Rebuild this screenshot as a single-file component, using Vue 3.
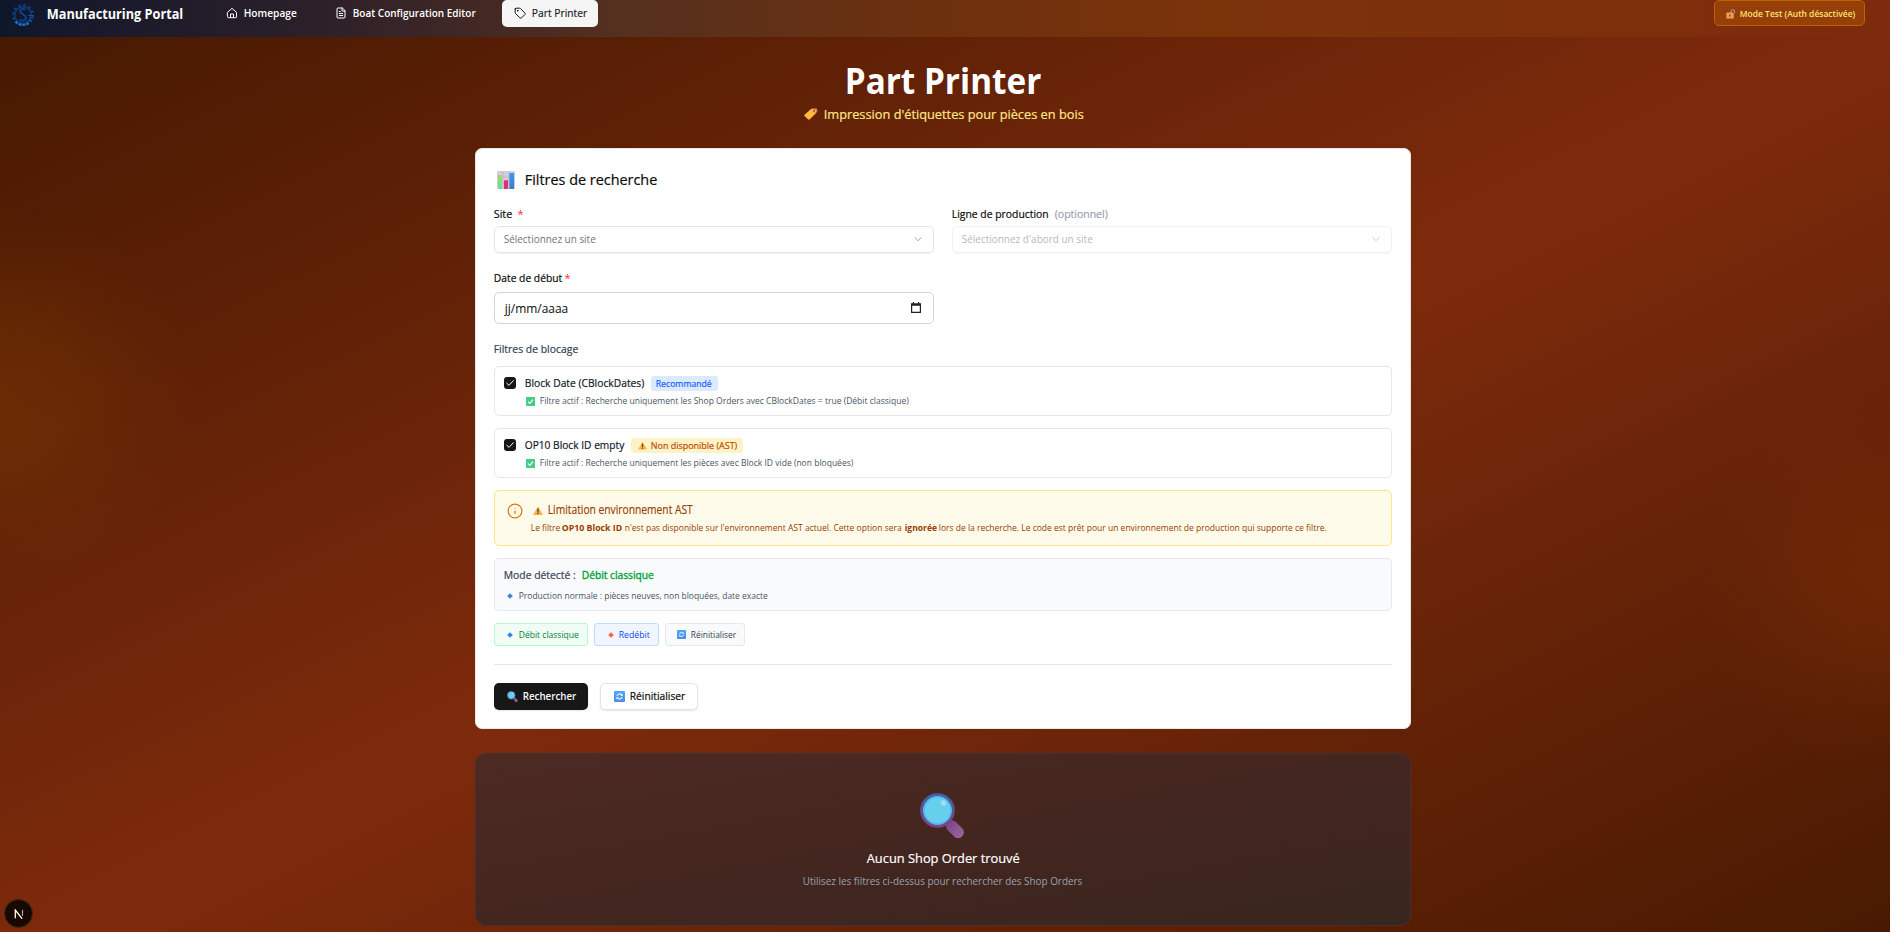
<script setup>
// Condenses or widens a label so that it fills the given width in pixels.
const vFit = {
  mounted(el, { value }) {
    const natural = el.getBoundingClientRect().width
    el.style.width = value + 'px'
    el.style.transform = `translateX(-0.25px) scaleX(${(value / natural).toFixed(4)})`
  }
}

const filters = [
  {
    title: 'Block Date (CBlockDates)', titleWidth: 119.5, badge: 'Recommandé', badgeWidth: 56, tone: 'blue',
    text: 'Filtre actif : Recherche uniquement les Shop Orders avec CBlockDates = true (Débit classique)', textWidth: 369
  },
  {
    title: 'OP10 Block ID empty', titleWidth: 99.5, badge: 'Non disponible (AST)', badgeWidth: 86.5, tone: 'amber',
    text: 'Filtre actif : Recherche uniquement les pièces avec Block ID vide (non bloquées)', textWidth: 313.5
  }
]
</script>

<template>
  <div class="page">
    <svg class="defs" width="0" height="0" aria-hidden="true">
      <defs>
        <linearGradient id="rim" x1="0" y1="0" x2="0" y2="1"><stop offset="0" stop-color="#45609f" /><stop offset="1" stop-color="#7d4387" /></linearGradient>
        <linearGradient id="handle" x1="0" y1="0" x2="1" y2="0"><stop offset="0" stop-color="#7a4689" /><stop offset="1" stop-color="#9c629b" /></linearGradient>
        <linearGradient id="bar-g" x1="0" y1="0" x2="0" y2="1"><stop offset="0" stop-color="#a4dc50" /><stop offset="1" stop-color="#62dfa0" /></linearGradient>
        <linearGradient id="bar-b" x1="0" y1="0" x2="0" y2="1"><stop offset="0" stop-color="#2ba1ee" /><stop offset="1" stop-color="#4a74d2" /></linearGradient>
        <linearGradient id="blue-tile" x1="0" y1="0" x2="0" y2="1"><stop offset="0" stop-color="#4fa9f5" /><stop offset="1" stop-color="#4c8be8" /></linearGradient>
        <symbol id="magnifier" viewBox="0 0 45 45">
          <rect x="25" y="30.5" width="20" height="11.5" rx="5.2" transform="rotate(45 35 36.2)" fill="url(#handle)" />
          <circle cx="17.5" cy="17.5" r="15.8" fill="#66cfeb" stroke="url(#rim)" stroke-width="3" />
          <circle cx="17.5" cy="17.5" r="13.6" fill="none" stroke="#4bb6ee" stroke-width="1.2" />
          <circle cx="23.5" cy="10" r="2.8" fill="#a5daf7" />
        </symbol>
        <symbol id="refresh" viewBox="0 0 12 12">
          <rect width="12" height="12" rx="1" fill="url(#blue-tile)" />
          <path d="M3.3 5.4A2.8 2.8 0 0 1 8.4 4.5M8.7 6.6A2.8 2.8 0 0 1 3.6 7.5" fill="none" stroke="#e6f2ff" stroke-width="1.3" />
          <path d="M9.4 2.8v2.6H6.8zM2.6 9.2V6.6h2.6z" fill="#e6f2ff" />
        </symbol>
        <symbol id="warning" viewBox="0 0 12 11">
          <path d="M6 .6 11.6 10a.6.6 0 0 1-.5.9H.9a.6.6 0 0 1-.5-.9z" fill="#fbb13d" />
          <path d="M6 3.6v3.6" stroke="#4a4250" stroke-width="1.5" stroke-linecap="round" /><circle cx="6" cy="9.2" r=".85" fill="#4a4250" />
        </symbol>
        <symbol id="check-tile" viewBox="0 0 10 10">
          <rect width="10" height="10" rx=".4" fill="#45cd85" /><path d="M2.3 5.2 4.2 7 7.8 3" fill="none" stroke="#fff" stroke-width="1.3" />
        </symbol>
        <symbol id="chevron" viewBox="0 0 8 5"><path d="M1 .8 4 3.8l3-3" fill="none" stroke="currentColor" stroke-width="1" stroke-linecap="round" /></symbol>
      </defs>
    </svg>

    <header class="topbar">
      <div class="brand">
        <svg class="logo" viewBox="0 0 24 26">
          <circle cx="12" cy="13" r="9.8" fill="none" stroke="#123d7c" stroke-width="2.4" stroke-dasharray="2.6 2.53" />
          <circle cx="12" cy="13" r="8.2" fill="none" stroke="#0f3874" stroke-width="1.7" />
          <path d="M4.500 19.500A9.600 9.600 0 0 0 17.500 21" fill="none" stroke="#2274d2" stroke-width="2.400" stroke-dasharray="2.600 1.400" />
          <path d="M14.500 7.500c-4-1.500-6 .5-5 2.700s5.500 2.300 5.500 5.300-3.500 4-6.500 2.200" fill="none" stroke="#123f86" stroke-width="2" />
          <path d="M17 13.500h6M18 16h5M17 18.500h4" stroke="#174f9d" stroke-width="1.200" />
        </svg>
        <span v-fit="136.500" class="brand-name">Manufacturing Portal</span>
      </div>
      <nav class="nav">
        <a class="nav-item home">
          <svg class="ico" viewBox="0 0 12 12"><path d="M1.500 5.300 6 1.400l4.500 3.900v4.600a.8.8 0 0 1-.8.8H2.300a.8.8 0 0 1-.8-.8z" /><path d="M4.500 10.500V7h3v3.500" /></svg>
          <span v-fit="53">Homepage</span>
        </a>
        <a class="nav-item boat">
          <svg class="ico" viewBox="0 0 12 12"><path d="M7 1H3a1 1 0 0 0-1 1v8a1 1 0 0 0 1 1h6a1 1 0 0 0 1-1V4z" /><path d="M7 1v3h3M4.300 4.500h1M4.300 6.500h3.400M4.300 8.500h3.400" /></svg>
          <span v-fit="123">Boat Configuration Editor</span>
        </a>
        <a class="nav-item active">
          <svg class="ico" viewBox="0 0 12 12"><path d="M1.200 2v3.700c0 .3.100.6.300.8l4.400 4.300a1.200 1.200 0 0 0 1.700 0l3.200-3.200a1.200 1.200 0 0 0 0-1.700L6.500 1.500a1.200 1.200 0 0 0-.8-.3H2a.8.8 0 0 0-.8.8z" /><circle cx="3.800" cy="3.800" r=".3" /></svg>
          <span v-fit="55.500">Part Printer</span>
        </a>
      </nav>
      <div class="test-badge">
        <svg viewBox="0 0 10 10"><path d="M5 4V2.600a1.800 1.800 0 0 1 3.600 0V4" fill="none" stroke="#a79aa8" stroke-width="1.100" /><rect x=".3" y="3.400" width="7.400" height="6.200" rx=".7" fill="#f29c4c" /><path d="M4 5.500v2" stroke="#65402d" stroke-width="1.300" /></svg>
        <span v-fit="115.500">Mode Test (Auth désactivée)</span>
      </div>
    </header>

    <main class="main">
      <h1 v-fit="196.500">Part Printer</h1>
      <p class="subtitle">
        <svg viewBox="0 0 14 12"><path d="M7.300.8 12 .5a1 1 0 0 1 1 1l-.5 3.300L5.800 11.200a1.300 1.300 0 0 1-1.800 0L.8 8.300a1.200 1.200 0 0 1 0-1.700z" fill="#fdb840" /><circle cx="10" cy="3" r="1.200" fill="#c6546d" /><path d="M10 3c1-3 3.500-2 3.500-.5S12 5 11.500 4.500" fill="none" stroke="#8b5262" stroke-width=".8" /></svg>
        <span v-fit="260">Impression d'étiquettes pour pièces en bois</span>
      </p>

      <section class="card">
        <h2>
          <svg viewBox="0 0 18 18"><rect width="18" height="18" rx="1.200" fill="#d4cbdc" /><path d="M0 6h18M0 12h18M6 0v18M12 0v18" stroke="#b9adc5" stroke-width=".6" /><rect x="1" y="4" width="4" height="14" rx=".5" fill="url(#bar-g)" /><rect x="7" y="9.300" width="4" height="8.700" rx=".5" fill="#dc326f" /><rect x="12.400" y="2" width="4.600" height="16" rx=".5" fill="url(#bar-b)" /></svg>
          <span v-fit="132.500">Filtres de recherche</span>
        </h2>

        <div class="fields">
          <div class="field">
            <div class="label"><span v-fit="18.500">Site</span><i class="star wide">*</i></div>
            <div class="select"><span v-fit="92">Sélectionnez un site</span><svg class="chev"><use href="#chevron" /></svg></div>
          </div>
          <div class="field">
            <div class="label"><span v-fit="97">Ligne de production</span><em v-fit="53">(optionnel)</em></div>
            <div class="select disabled"><span v-fit="131">Sélectionnez d'abord un site</span><svg class="chev"><use href="#chevron" /></svg></div>
          </div>
          <div class="field date">
            <div class="label"><span v-fit="68.500">Date de début</span><i class="star">*</i></div>
            <div class="input">
              <span v-fit="63.500">jj/mm/aaaa</span>
              <svg viewBox="0 0 10 11"><path d="M.6 2h8.800v8.400H.6z" fill="none" stroke="#222" stroke-width="1.200" /><path d="M0 1.400h10v2.400H0zM1.800 0h1.200v2H1.800zM7 0h1.200v2H7z" fill="#222" /></svg>
            </div>
          </div>
        </div>

        <h3><span v-fit="84.500">Filtres de blocage</span></h3>

        <div v-for="f in filters" :key="f.title" class="filter">
          <div class="filter-head">
            <span class="checkbox"><svg viewBox="0 0 12 12"><path d="M2.800 6.300 5 8.400l4.300-4.700" fill="none" stroke="#fff" stroke-width="1" stroke-linecap="round" /></svg></span>
            <span v-fit="f.titleWidth" class="filter-title">{{ f.title }}</span>
            <span class="tag" :class="f.tone"><svg v-if="f.tone === 'amber'"><use href="#warning" /></svg><span v-fit="f.badgeWidth">{{ f.badge }}</span></span>
          </div>
          <div class="filter-note"><svg><use href="#check-tile" /></svg><span v-fit="f.textWidth">{{ f.text }}</span></div>
        </div>

        <div class="alert">
          <svg class="info" viewBox="0 0 16 16"><circle cx="8" cy="8" r="6.900" fill="none" stroke="#e17100" stroke-width="1.200" /><path d="M8 7.400v3.500M8 4.900v.8" stroke="#e17100" stroke-width="1.200" /></svg>
          <div class="alert-body">
            <div class="alert-title"><svg><use href="#warning" /></svg><span v-fit="145">Limitation environnement AST</span></div>
            <div class="alert-text">
              <span v-fit="29.500">Le filtre</span><b v-fit="60.500">OP10 Block ID</b><span v-fit="277">n'est pas disponible sur l'environnement AST actuel. Cette option sera</span><b v-fit="32.300">ignorée</b><span v-fit="388">lors de la recherche. Le code est prêt pour un environnement de production qui supporte ce filtre.</span>
            </div>
          </div>
        </div>

        <div class="mode">
          <div class="mode-head"><span v-fit="72">Mode détecté :</span><span v-fit="72" class="green">Débit classique</span></div>
          <div class="mode-note"><svg class="dia blue-dia" viewBox="0 0 6 6"><path d="M3 .2 5.800 3 3 5.800.2 3z" /></svg><span v-fit="249">Production normale : pièces neuves, non bloquées, date exacte</span></div>
        </div>

        <div class="presets">
          <button class="preset p-green"><svg class="dia blue-dia" viewBox="0 0 6 6"><path d="M3 .2 5.800 3 3 5.800.2 3z" /></svg><span v-fit="60">Débit classique</span></button>
          <button class="preset p-blue"><svg class="dia orange-dia" viewBox="0 0 6 6"><path d="M3 .2 5.800 3 3 5.800.2 3z" /></svg><span v-fit="31">Redébit</span></button>
          <button class="preset p-gray"><svg class="tile"><use href="#refresh" /></svg><span v-fit="45.500">Réinitialiser</span></button>
        </div>

        <div class="actions">
          <button class="btn dark"><svg><use href="#magnifier" /></svg><span v-fit="53.500">Rechercher</span></button>
          <button class="btn light"><svg><use href="#refresh" /></svg><span v-fit="55.500">Réinitialiser</span></button>
        </div>
      </section>

      <section class="empty">
        <svg><use href="#magnifier" /></svg>
        <h4 v-fit="153">Aucun Shop Order trouvé</h4>
        <p v-fit="279.500">Utilisez les filtres ci-dessus pour rechercher des Shop Orders</p>
      </section>
    </main>

    <div class="dev"><svg viewBox="0 0 10 10"><path d="M1.300 9.300V1l6.800 8.700" fill="none" stroke="#fff" stroke-width="1.300" /><path d="M8.500 .8v6" stroke="#aaa" stroke-width="1.200" /></svg></div>
  </div>
</template>

<style>
html, body { margin: 0; overflow: hidden; }
</style>

<style scoped>
* { box-sizing: border-box; }
.page {
  position: relative; width: 1890px; height: 932px; overflow: hidden;
  font-family: "Open Sans", "Noto Sans", sans-serif; font-size: 11px; line-height: 16px; color: #0a0a0a;
  background:
    radial-gradient(circle 195px at 0 400px, rgba(122, 58, 0, .42), rgba(122, 58, 0, .34) 35%, rgba(122, 58, 0, .12) 70%, rgba(122, 58, 0, 0)),
    radial-gradient(circle 190px at 1890px 585px, rgba(140, 52, 4, .34), rgba(140, 52, 4, .25) 35%, rgba(140, 52, 4, .09) 70%, rgba(140, 52, 4, 0)),
    linear-gradient(to bottom right, #461901, #7e2a0c 50%, #461901) 0 37px / 1890px 932px no-repeat;
}
.defs { position: absolute; }
span, em, b, h1, h4, p { white-space: nowrap; }
span, em, b, h1, h4, .empty p { transform-origin: 0 50%; }
h1, h2, h3, h4, p { margin: 0; }
svg { flex: none; display: block; }
.topbar {
  height: 37px; display: flex; align-items: flex-start;
  background: linear-gradient(to right, #0f172b, #2d2029 17%, #55301f 33%, #6c300e 49%, #7b330a 64%, #7d2e0b 88%, #7e2a0c);
}
.brand { display: flex; width: 215px; height: 28px; padding-left: 11px; align-items: center; }
.logo { width: 24px; height: 26px; margin-top: 2px; }
.brand-name { margin-left: 12px; font-size: 13.500px; font-weight: 700; color: #fff; }
.nav { display: flex; flex: 1; }
.nav-item { display: flex; align-items: center; height: 27px; padding-bottom: 1px; font-weight: 600; color: #fff; }
.nav-item > span { margin-left: 5.500px; }
.ico { width: 12px; height: 12px; fill: none; stroke: currentColor; stroke-width: 1; stroke-linejoin: round; stroke-linecap: round; }
.home { padding-left: 11px; width: 109px; }
.boat { padding-left: 11px; width: 178px; }
.active { width: 96px; padding-left: 12px; background: #f5f5f5; color: #171717; border-radius: 5px; font-weight: 400; -webkit-text-stroke: .15px; }
.test-badge {
  display: flex; align-items: center; width: 151px; height: 26px; margin-right: 25px; padding: 2px 0 0 11px;
  border: 1px solid #bb6400; border-radius: 5px; background: #973f08; color: #fde376; font-size: 9.500px; font-weight: 600;
}
.test-badge svg { width: 10px; height: 10px; margin-right: 4px; margin-top: -1px; }
.main { display: flex; flex-direction: column; align-items: center; width: 936px; margin-left: 475px; }
h1 { height: 44px; margin-top: 22px; font-size: 36px; line-height: 44px; font-weight: 700; color: #fff; }
.subtitle { display: flex; align-items: center; height: 20px; margin: 1px 0 0 2px; font-size: 13.500px; color: #fee685; -webkit-text-stroke: .2px; }
.subtitle svg { width: 14px; height: 12px; margin-right: 6px; }
.card { width: 936px; height: 581px; margin-top: 24px; padding: 19px 18px; border: 1px solid #e5e7eb; border-radius: 7px; background: #fff; }
h2 { display: flex; align-items: center; height: 24px; padding-bottom: 2px; font-size: 15px; font-weight: 400; -webkit-text-stroke: .2px; }
h2 svg { width: 18px; height: 18px; margin: 1px 10px 0 2.500px; }
.fields { display: grid; grid-template-columns: 440px 440px; column-gap: 18px; margin-top: 14px; }
.label { display: flex; align-items: center; height: 16px; -webkit-text-stroke: .2px; }
.label em { margin-left: 5.500px; font-style: normal; color: #99a1af; }
.star { margin-left: 2px; font-style: normal; color: #fb2c36; -webkit-text-stroke: 0; }
.star.wide { margin-left: 5px; }
.select {
  display: flex; align-items: center; justify-content: space-between; height: 27px; margin-top: 4px; padding: 0 11px 2px 9px;
  border: 1px solid #e5e5e5; border-radius: 5px; color: #737373; box-shadow: 0 1px 1px rgba(0, 0, 0, .05);
}
.chev { width: 8px; height: 5px; margin-top: 1px; color: #a0a0a0; }
.disabled { opacity: .5; }
.field.date { margin-top: 17px; }
.input {
  display: flex; align-items: center; justify-content: space-between; height: 32px; margin-top: 6px; padding: 2px 12px 0 9.500px;
  border: 1px solid #d1d5dc; border-radius: 5px; font-size: 12px;
}
.input svg { width: 10px; height: 11px; margin-bottom: 3px; }
h3 { display: flex; align-items: center; height: 16px; margin-top: 17px; color: #364153; font-size: 11px; font-weight: 400; -webkit-text-stroke: .2px; }
.filter { height: 50px; margin-top: 9px; padding: 8px 9px; border: 1px solid #e5e7eb; border-radius: 5px; }
.filter + .filter { margin-top: 12px; }
.filter-head { display: flex; align-items: center; height: 17px; }
.checkbox { width: 12px; height: 12px; border-radius: 3px; background: #171717; margin-top: -1px; }
.filter-title { margin: -1px 0 0 9px; font-size: 11.500px; color: #101828; -webkit-text-stroke: .2px; }
.tag { display: flex; align-items: center; height: 15px; margin-left: 6px; padding: 0 5.500px; border-radius: 3px; font-size: 9.500px; -webkit-text-stroke: .2px; }
.tag.blue { color: #155dfc; background: #dbeafe; }
.tag.amber { color: #bb4d00; background: #fef3c6; }
.tag svg { width: 9px; height: 9px; margin: 0 4.500px 0 1.500px; }
.filter-note { display: flex; align-items: center; height: 14px; margin: 2px 0 0 22px; font-size: 9.500px; color: #4a5565; }
.filter-note svg { width: 9px; height: 9px; margin-right: 4.500px; }
.alert { display: flex; height: 56px; margin-top: 12px; padding: 11px 11.500px; border: 1px solid #fee685; border-radius: 5px; background: #fffbeb; color: #973c00; }
.info { width: 16px; height: 16px; margin-top: 1px; }
.alert-body { margin-left: 8px; }
.alert-title { display: flex; align-items: center; height: 16px; font-size: 12px; -webkit-text-stroke: .15px; }
.alert-title svg { width: 10px; height: 9px; margin: 1px 5px 0 2px; }
.alert-text { display: flex; align-items: center; gap: 2.400px; height: 16px; margin-top: 2px; font-size: 9.500px; }
.mode { height: 53px; margin-top: 12px; padding: 8px 9px; border: 1px solid #e5e7eb; border-radius: 5px; background: #f9fafb; }
.mode-head { display: flex; gap: 6px; height: 16px; font-size: 11.500px; color: #364153; -webkit-text-stroke: .2px; }
.green { color: #00a63e; -webkit-text-stroke: .4px; }
.mode-note { display: flex; align-items: center; height: 14px; margin-top: 6px; font-size: 9.500px; color: #4a5565; }
.dia { width: 6px; height: 6px; margin: 0 6px 0 3px; }
.blue-dia { fill: #3b82dd; }
.orange-dia { fill: #f4693f; }
.presets { display: flex; gap: 6px; margin-top: 12px; }
button { font-family: inherit; display: flex; align-items: center; }
.preset { height: 23px; padding: 0 9px; border: 1px solid; border-radius: 3px; font-size: 9.500px; }
.preset .dia { margin-right: 5.500px; }
.p-green { width: 94px; color: #008236; background: #f0fdf4; border-color: #b9f8cf; }
.p-blue { width: 65px; color: #1447e6; background: #eff6ff; border-color: #bedbff; padding-left: 9.500px; }
.p-gray { width: 80px; color: #364153; background: #f9fafb; border-color: #e5e7eb; padding-left: 11px; }
.tile { width: 9px; height: 9px; margin-right: 4.500px; }
.actions { display: flex; gap: 12px; margin-top: 18px; padding-top: 18px; border-top: 1px solid #e5e7eb; }
.btn { height: 27px; border: 0; border-radius: 5px; font-size: 11px; box-shadow: 0 1px 2px rgba(0, 0, 0, .1); padding: 0 0 2px 13px; }
.btn svg { width: 11px; height: 11px; margin: 1px 4.500px 0 0; }
.dark { width: 94px; background: #171717; color: #fafafa; font-weight: 600; }
.light { width: 98px; background: #fff; border: 1px solid #e5e5e5; color: #0a0a0a; -webkit-text-stroke: .2px; }
.empty {
  display: flex; flex-direction: column; align-items: center; width: 936px; height: 173px; margin-top: 24px; padding-top: 39px;
  border: 1px solid #3d3337; border-radius: 11px; background: linear-gradient(to bottom right, #4d2a23, #43261f 50%, #38261f);
}
.empty svg { width: 45px; height: 45px; margin-right: 1px; }
.empty h4 { margin: 11px 0 0; font-size: 13.500px; line-height: 18px; font-weight: 400; color: #fff; -webkit-text-stroke: .2px; }
.empty p { margin: 6px 0 0; font-size: 11px; color: #99a1af; }
.dev {
  position: absolute; left: 4px; top: 899px; width: 29px; height: 29px; border-radius: 50%;
  display: flex; align-items: center; justify-content: center; background: #180900; border: 1px solid #42281c;
}
.dev svg { width: 10px; height: 10px; }
</style>
